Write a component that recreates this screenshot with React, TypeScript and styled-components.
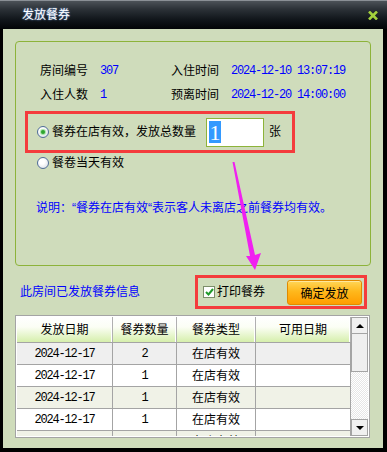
import styled, { createGlobalStyle } from 'styled-components';

const cjk = `"Liberation Sans", "Noto Sans CJK SC", sans-serif`;
const mono = `"Liberation Mono", "Noto Sans CJK SC", monospace`;

const GlobalStyle = createGlobalStyle`
  html, body {
    margin: 0;
    padding: 0;
    background: #000;
  }
  body {
    font-family: ${cjk};
    font-size: 12px;
    line-height: 16px;
  }
`;

const Window = styled.div`
  position: relative;
  width: 387px;
  height: 452px;
  background: #000;
  display: flex;
  flex-direction: column;
  overflow: hidden;
`;

const TitleBar = styled.div`
  height: 29px;
  flex: none;
  display: flex;
  align-items: center;
  justify-content: space-between;
  padding: 0 9px 0 22px;
  box-sizing: border-box;
  border-top: 1px solid #8a9096;
  background: linear-gradient(to bottom, #4c5258 0px, #2c3238 8px, #12171c 18px, #030507 28px);
`;

const Title = styled.span`
  color: #fff;
  font-size: 12px;
  text-shadow: 0 0 2px #7fb0ff;
`;

const Body = styled.div`
  flex: 1;
  margin: 0 4px 4px 3px;
  background: #cfdcbb;
  padding: 12px 12px 0;
  display: flex;
  flex-direction: column;
`;

const GroupBox = styled.div`
  height: 225px;
  box-sizing: border-box;
  border: 1px solid #8db33a;
  border-radius: 4px;
  padding-top: 21px;
`;

const InfoGrid = styled.div`
  display: grid;
  grid-template-columns: 60px 71px 60px auto;
  row-gap: 8px;
  padding-left: 24px;
`;

const Label = styled.span`
  color: #000;
`;

const Value = styled.span`
  color: #0000ff;
  font-family: ${mono};
  font-size: 12px;
  letter-spacing: -1.2px;
`;

const HighlightBox = styled.div<{ $width: number; $height: number }>`
  width: ${p => p.$width}px;
  height: ${p => p.$height}px;
  box-sizing: border-box;
  border: 3px solid #f43c3c;
  display: flex;
  align-items: center;
`;

const OptionBox = styled(HighlightBox)`
  margin: 8px 0 0 9px;
  padding-left: 9px;
`;

const RadioRow = styled.label`
  display: flex;
  align-items: center;
  gap: 3px;
`;

const SecondRadioRow = styled(RadioRow)`
  margin: 2px 0 0 21px;
`;

const Radio = styled.span<{ $checked?: boolean }>`
  position: relative;
  width: 12px;
  height: 12px;
  box-sizing: border-box;
  border-radius: 50%;
  border: 1px solid #4f6d98;
  background: radial-gradient(circle at 40% 35%, #ffffff 30%, #d4d9e2 100%);
  flex: none;

  &::after {
    content: '';
    display: ${p => (p.$checked ? 'block' : 'none')};
    position: absolute;
    left: 3px;
    top: 3px;
    width: 4px;
    height: 4px;
    border-radius: 50%;
    background: #2fa52f;
    box-shadow: 0 0 1px 1px #9fe09f;
  }
`;

const QtyInput = styled.div`
  width: 58px;
  height: 29px;
  box-sizing: border-box;
  border: 1px solid #8db33a;
  background: #fff;
  margin-left: 10px;
  padding: 2px 0 0 2px;
`;

const Selected = styled.span`
  display: inline-block;
  width: 12px;
  height: 22px;
  background: #3399ff;
  color: #fff;
  font-family: "Liberation Serif", serif;
  font-size: 22px;
  line-height: 23px;
  text-align: center;
`;

const Unit = styled.span`
  margin-left: 5px;
`;

const Note = styled.div`
  margin: 29px 0 0 20px;
  color: #0000ff;
`;

const BottomRow = styled.div`
  margin-top: 9px;
  height: 34px;
  display: flex;
  align-items: center;
  justify-content: space-between;
`;

const InfoTitle = styled.span`
  margin-left: 5px;
  color: #0000ff;
`;

const PrintBox = styled(HighlightBox)`
  margin-right: 4px;
  padding: 0 2px 0 5px;
`;

const Checkbox = styled.span`
  width: 12px;
  height: 12px;
  box-sizing: border-box;
  border: 1px solid #7c8e6a;
  background: #fff;
  display: flex;
  align-items: center;
  justify-content: center;
`;

const PrintLabel = styled.span`
  margin-left: 2px;
`;

const ConfirmButton = styled.button`
  margin-left: auto;
  width: 75px;
  height: 25px;
  box-sizing: border-box;
  border: 1px solid #e08a00;
  border-radius: 3px;
  background: linear-gradient(to bottom, #ffd657 0%, #ffb81c 45%, #ff9d00 100%);
  box-shadow: inset 0 1px 0 #ffe79a;
  font-family: ${cjk};
  font-size: 12px;
  color: #000;
  padding: 0;
`;

const TableFrame = styled.div`
  margin: 6px 1px 0 0;
  height: 123px;
  box-sizing: border-box;
  border: 1px solid #a4a4a4;
  padding: 1px;
  background: #fff;
  display: grid;
  grid-template-columns: 334px 17px;
  overflow: hidden;
`;

const TableArea = styled.div`
  overflow: hidden;
`;

const Row = styled.div<{ $bg?: string }>`
  display: grid;
  grid-template-columns: 96px 64px 79px 95px;
  height: 22px;
  box-sizing: border-box;
  border-bottom: 1px solid #a4a4a4;
  background: ${p => p.$bg ?? '#fff'};
`;

const HeaderRow = styled(Row)`
  height: 26px;
  background: linear-gradient(to bottom, #ffffff 0%, #fbfef5 40%, #d6efac 100%);
`;

const Cell = styled.div<{ $mono?: boolean }>`
  border-right: 1px solid #a4a4a4;
  display: flex;
  align-items: center;
  justify-content: center;
  font-family: ${p => (p.$mono ? mono : cjk)};
  font-size: 12px;
  letter-spacing: ${p => (p.$mono ? '-1.2px' : '0')};
  color: #000;
`;

const HeaderCell = styled(Cell)`
  box-shadow: inset -1px 0 0 #ffffff;
  border-right-color: #b0b0b0;
`;

const Scrollbar = styled.div`
  display: flex;
  flex-direction: column;
  background: repeating-conic-gradient(#e6e6e6 0 25%, #ffffff 0 50%) 0 0 / 2px 2px;
`;

const ScrollButton = styled.div`
  height: 17px;
  box-sizing: border-box;
  border: 1px solid #a4a4a4;
  background: #f0f0f0;
  display: flex;
  align-items: center;
  justify-content: center;
`;

const Triangle = styled.span<{ $down?: boolean }>`
  width: 0;
  height: 0;
  border-left: 4px solid transparent;
  border-right: 4px solid transparent;
  ${p => (p.$down ? 'border-top: 4px solid #000;' : 'border-bottom: 4px solid #000;')}
`;

const Thumb = styled.div`
  height: 38px;
  box-sizing: border-box;
  border: 1px solid #a4a4a4;
  border-top: none;
  background: #efefef;
`;

const Track = styled.div`
  flex: 1;
`;

const ArrowOverlay = styled.svg`
  position: absolute;
  left: 225px;
  top: 155px;
  pointer-events: none;
`;

const rows = [
  { date: '2024-12-17', qty: 2, type: '在店有效', bg: '#efefef' },
  { date: '2024-12-17', qty: 1, type: '在店有效', bg: '#ffffff' },
  { date: '2024-12-17', qty: 1, type: '在店有效', bg: '#f0f2e7' },
  { date: '2024-12-17', qty: 1, type: '在店有效', bg: '#ffffff' },
  { date: '2024-12-17', qty: 1, type: '在店有效', bg: '#f0f2e7' },
];

export default function App() {
  return (
    <>
      <GlobalStyle />
      <Window>
        <TitleBar>
          <Title>发放餐券</Title>
          <svg width="10" height="9" viewBox="0 0 10 9">
            <path d="M1 0.5 L9 8.5 M9 0.5 L1 8.5" stroke="#a3d13c" strokeWidth="2.6" />
          </svg>
        </TitleBar>
        <Body>
          <GroupBox>
            <InfoGrid>
              <Label>房间编号</Label>
              <Value>307</Value>
              <Label>入住时间</Label>
              <Value>2024-12-10 13:07:19</Value>
              <Label>入住人数</Label>
              <Value>1</Value>
              <Label>预离时间</Label>
              <Value>2024-12-20 14:00:00</Value>
            </InfoGrid>
            <OptionBox $width={270} $height={42}>
              <RadioRow>
                <Radio $checked />
                <span>餐券在店有效，发放总数量</span>
              </RadioRow>
              <QtyInput>
                <Selected>1</Selected>
              </QtyInput>
              <Unit>张</Unit>
            </OptionBox>
            <SecondRadioRow>
              <Radio />
              <span>餐卷当天有效</span>
            </SecondRadioRow>
            <Note>说明：“餐券在店有效“表示客人未离店之前餐券均有效。</Note>
          </GroupBox>

          <BottomRow>
            <InfoTitle>此房间已发放餐券信息</InfoTitle>
            <PrintBox $width={172} $height={34}>
              <Checkbox>
                <svg width="9" height="8" viewBox="0 0 9 8">
                  <path d="M1 4 L3.5 6.5 L8 1" fill="none" stroke="#1f9a2a" strokeWidth="2" />
                </svg>
              </Checkbox>
              <PrintLabel>打印餐券</PrintLabel>
              <ConfirmButton>确定发放</ConfirmButton>
            </PrintBox>
          </BottomRow>

          <TableFrame>
            <TableArea>
              <HeaderRow>
                <HeaderCell>发放日期</HeaderCell>
                <HeaderCell>餐券数量</HeaderCell>
                <HeaderCell>餐券类型</HeaderCell>
                <HeaderCell>可用日期</HeaderCell>
              </HeaderRow>
              {rows.map((r, i) => (
                <Row key={i} $bg={r.bg}>
                  <Cell $mono>{r.date}</Cell>
                  <Cell $mono>{r.qty}</Cell>
                  <Cell>{r.type}</Cell>
                  <Cell />
                </Row>
              ))}
            </TableArea>
            <Scrollbar>
              <ScrollButton>
                <Triangle />
              </ScrollButton>
              <Thumb />
              <Track />
              <ScrollButton>
                <Triangle $down />
              </ScrollButton>
            </Scrollbar>
          </TableFrame>
        </Body>

        <ArrowOverlay width="45" height="120" viewBox="0 0 45 120">
          <polygon
            points="7.5,7 9.5,7 30,100 36,98 30,115 21,101 25,101"
            fill="#f020f0"
          />
        </ArrowOverlay>
      </Window>
    </>
  );
}
